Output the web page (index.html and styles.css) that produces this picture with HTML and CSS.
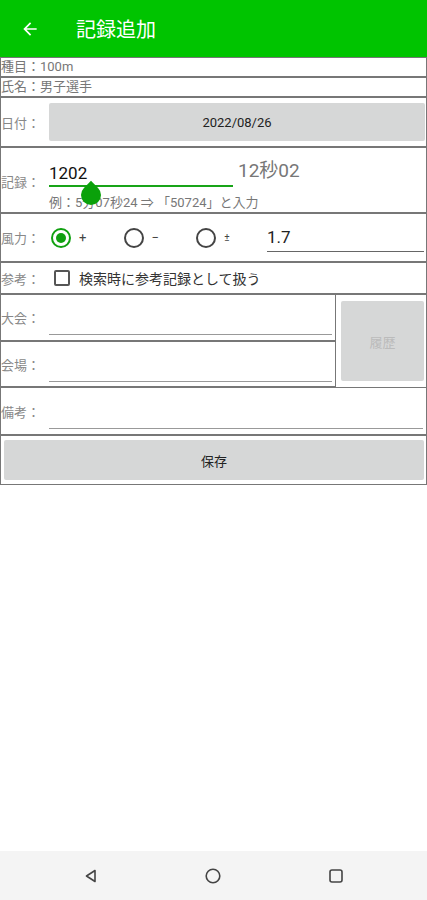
FILE: index.html
```html
<!DOCTYPE html>
<html lang="ja">
  <head>
    <meta charset="utf-8" />
    <title>記録追加</title>
    <link rel="stylesheet" href="styles.css">
  </head>
  <body>
    <div class="screen">
      <!--App bar-->
      <div class="appbar">
        <svg class="back" width="20" height="20" viewBox="0 0 24 24">
          <path d="M20 11H7.83l5.59-5.59L12 4l-8 8 8 8 1.41-1.41L7.83 13H20v-2z" fill="#fff"/>
        </svg>
        <span class="title">記録追加</span>
      </div>

      <div class="form">
        <div class="row line">種目：100m</div>
        <div class="row line">氏名：男子選手</div>

        <div class="row date">
          <span class="label">日付：</span>
          <div class="btn datebtn">2022/08/26</div>
        </div>

        <div class="row record">
          <span class="label">記録：</span>
          <div class="recbox">
            <div class="recline">
              <div class="recinput">1202</div>
              <span class="rectime">12秒02</span>
            </div>
            <div class="hint">例：5分07秒24 ⇒ 「50724」と入力</div>
            <span class="handle"></span>
          </div>
        </div>

        <div class="row wind">
          <span class="label">風力：</span>
          <div class="radios">
            <span class="radio on"></span><span class="rlabel">+</span>
            <span class="radio"></span><span class="rlabel">−</span>
            <span class="radio"></span><span class="rlabel small">±</span>
          </div>
          <div class="windinput">1.7</div>
        </div>

        <div class="row ref">
          <span class="label">参考：</span>
          <span class="check"></span>
          <span class="checktext">検索時に参考記録として扱う</span>
        </div>

        <div class="split">
          <div class="splitleft">
            <div class="row field">
              <span class="label">大会：</span>
              <div class="edit"></div>
            </div>
            <div class="row field">
              <span class="label">会場：</span>
              <div class="edit"></div>
            </div>
          </div>
          <div class="splitright">
            <div class="btn history">履歴</div>
          </div>
        </div>

        <div class="row field note">
          <span class="label">備考：</span>
          <div class="edit"></div>
        </div>

        <div class="row save">
          <div class="btn savebtn">保存</div>
        </div>
      </div>

      <div class="spacer"></div>

      <!--Navigation bar-->
      <div class="navbar">
        <svg width="16" height="16" viewBox="0 0 16 16"><path d="M12 2.5 L3.5 8 L12 13.5 Z" fill="none" stroke="#444" stroke-width="1.6" stroke-linejoin="round"/></svg>
        <svg width="18" height="18" viewBox="0 0 18 18"><circle cx="9" cy="9" r="6.8" fill="none" stroke="#444" stroke-width="1.6"/></svg>
        <svg width="16" height="16" viewBox="0 0 16 16"><rect x="2" y="2" width="12" height="12" rx="2" fill="none" stroke="#444" stroke-width="1.6"/></svg>
      </div>
    </div>
  </body>
</html>
```

FILE: styles.css
```css
body {margin: 0;
      font-family: Roboto, "Noto Sans CJK JP", sans-serif;
      background-color: white;}

.screen {width: 427px;
         height: 900px;
         display: flex;
         flex-direction: column;}

.appbar {height: 57px;
         background-color: #00c400;
         display: flex;
         align-items: center;
         flex-shrink: 0;}

.back {margin-left: 20px;}

.title {margin-left: 36px;
        color: white;
        font-size: 20px;
        font-family: "Noto Sans CJK JP", sans-serif;}

.form {display: flex;
       flex-direction: column;}

.row {border: 1px solid #777;
      box-sizing: border-box;
      display: flex;
      align-items: center;
      color: #777;
      font-size: 13px;}

.label {width: 48px;
        flex-shrink: 0;
        font-family: "Noto Sans CJK JP", sans-serif;
        font-size: 13px;
        color: #888;}

.line {height: 20px;
       font-family: Roboto, "Noto Sans CJK JP", sans-serif;
       line-height: 18px;}

.btn {background-color: #d6d7d7;
      border-radius: 2px;
      display: flex;
      align-items: center;
      justify-content: center;
      color: #222;
      font-size: 13px;}

.date {height: 50px;}
.datebtn {flex: 1;
          height: 38px;
          margin-right: 1px;}

.record {height: 66px;
         align-items: flex-start;}
.record .label {margin-top: 24px;}
.recbox {position: relative;
         flex: 1;
         padding-top: 9px;}
.recline {display: flex;
          align-items: flex-end;}
.recinput {width: 184px;
           border-bottom: 2px solid #18a418;
           font-size: 17px;
           color: #111;
           padding-bottom: 1px;
           line-height: 22px;}
.rectime {margin-left: 5px;
          font-size: 19px;
          color: #777;
          line-height: 30px;
          position: relative;
          top: -1px;}
.hint {margin-top: 5px;
       font-size: 13px;
       color: #777;}
.handle {position: absolute;
         left: 32px;
         top: 37px;
         width: 20px;
         height: 20px;
         background-color: #0aa10a;
         border-radius: 0 50% 50% 50%;
         transform: rotate(45deg);}

.wind {height: 49px;}
.radios {display: flex;
         align-items: center;
         width: 218px;}
.radio {width: 20px;
        height: 20px;
        border: 2px solid #444;
        border-radius: 50%;
        box-sizing: border-box;
        margin-left: 2px;
        position: relative;}
.radio.on {border-color: #10a010;}
.radio.on::after {content: "";
                  position: absolute;
                  left: 3px;
                  top: 3px;
                  width: 10px;
                  height: 10px;
                  border-radius: 50%;
                  background-color: #10a010;}
.rlabel {width: 51px;
         padding-left: 8px;
         box-sizing: border-box;
         font-size: 13px;
         color: #444;}
.rlabel.small {font-size: 10px;}
.windinput {flex: 1;
            margin-right: 2px;
            border-bottom: 1px solid #666;
            font-size: 17px;
            color: #222;
            padding-bottom: 4px;
            margin-top: 4px;}

.ref {height: 32px;}
.check {width: 16px;
        height: 16px;
        border: 2px solid #555;
        border-radius: 2px;
        box-sizing: border-box;
        margin-left: 5px;}
.checktext {margin-left: 9px;
            font-size: 14px;
            color: #333;
            font-family: "Noto Sans CJK JP", sans-serif;}

.split {display: flex;
        border-top: 1px solid #777;
        border-right: 1px solid #777;}
.splitleft {width: 336px;
            display: flex;
            flex-direction: column;}
.splitleft .row {border-top: none;}
.splitleft .row + .row {border-top: 1px solid #777;}
.field {height: 47px;}
.splitleft .field {height: 46px;}
.edit {flex: 1;
       height: 18px;
       margin-top: 16px;
       margin-right: 3px;
       border-bottom: 1px solid #999;}
.splitright {flex: 1;
             display: flex;
             padding: 6px 2px 6px 5px;}
.history {flex: 1;
          color: #bbb;}

.note {height: 48px;}

.save {height: 50px;
       padding: 4px 2px 4px 3px;}
.savebtn {flex: 1;
          height: 40px;}

.spacer {flex: 1;}

.navbar {height: 49px;
         background-color: #f4f4f4;
         display: flex;
         align-items: center;
         justify-content: space-around;
         padding: 0 30px;
         flex-shrink: 0;}
```
